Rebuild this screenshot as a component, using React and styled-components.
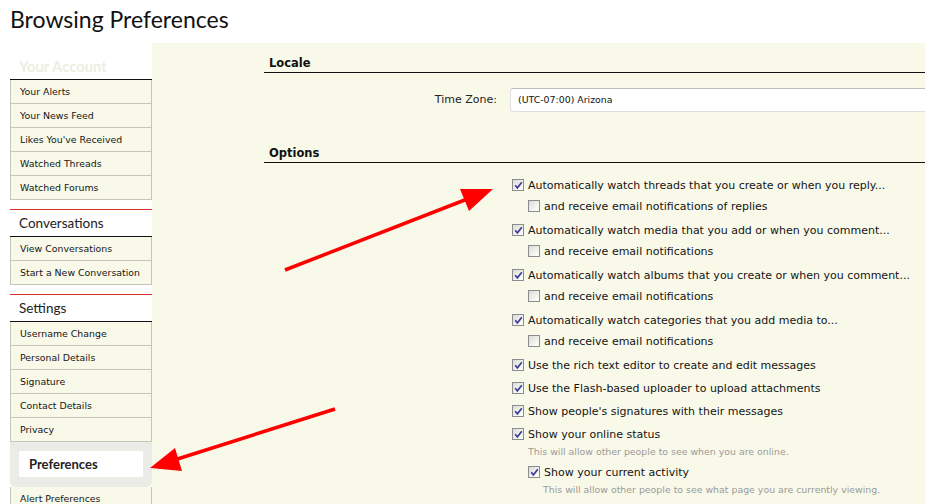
import React from "react";
import styled, { createGlobalStyle } from "styled-components";

const Global = createGlobalStyle`
  html, body { margin: 0; padding: 0; background: #fff; overflow: hidden; }
  body { font-family: "DejaVu Sans", Verdana, sans-serif; color: #141414; }
  * { box-sizing: border-box; }
`;

const Page = styled.div`
  position: relative;
  width: 925px;
  height: 504px;
  overflow: hidden;
`;

const Title = styled.h1`
  margin: 0;
  height: 43px;
  padding: 4px 0 0 10px;
  font-family: Lato, "Open Sans", sans-serif;
  font-weight: 400;
  font-size: 23px;
  line-height: 30px;
  color: #111;
`;

const Columns = styled.div`
  display: flex;
  align-items: stretch;
  height: 461px;
`;

const Sidebar = styled.nav`
  width: 152px;
  padding: 9px 0 0 10px;
  flex-shrink: 0;
`;

const Section = styled.div`
  margin-bottom: 9px;
`;

const SectionHead = styled.div`
  height: 28px;
  border-top: 1px solid ${(p) => (p.$first ? "transparent" : "#d0302a")};
  border-bottom: 1px solid #111;
  padding-left: 9px;
  font-family: Lato, "Open Sans", sans-serif;
  font-size: ${(p) => (p.$first ? "14.8px" : "13.5px")};
  font-weight: ${(p) => (p.$first ? 700 : 400)};
  line-height: 26px;
  color: ${(p) => (p.$faint ? "#eeeedf" : "#222")};
`;

const NavItem = styled.div`
  height: 24px;
  background: #f9f9e9;
  border-left: 1px solid #c6c6b6;
  border-right: 1px solid #c6c6b6;
  border-bottom: 1px solid #c6c6b6;
  padding-left: 9px;
  font-size: 9.4px;
  line-height: 23px;
  color: #151515;
  white-space: nowrap;
`;

const SelectedWrap = styled.div`
  background: #ebebe8;
  padding: 9px;
  border-radius: 0 0 5px 5px;
  height: 45px;
`;

const SelectedItem = styled.div`
  background: #fff;
  height: 26px;
  padding-left: 10px;
  font-family: Lato, "Open Sans", sans-serif;
  font-weight: 700;
  font-size: 13px;
  line-height: 26px;
  color: #222;
`;

const Main = styled.main`
  flex: 1;
  background: #f9f9e9;
  padding: 7px 0 0 112px;
  overflow: hidden;
`;

const Heading = styled.h2`
  margin: ${(p) => p.$mt || "0"} 0 0 0;
  height: 23px;
  border-bottom: 1px solid #111;
  padding: 3px 0 0 5px;
  font-size: 11.5px;
  font-weight: 700;
  line-height: 20px;
  color: #111;
`;

const FormRow = styled.div`
  display: grid;
  grid-template-columns: 233px 1fr;
  column-gap: 13px;
  align-items: start;
  margin-top: ${(p) => p.$mt || "0"};
`;

const Label = styled.div`
  text-align: right;
  font-size: 11px;
  line-height: 24px;
  color: #222;
`;

const Input = styled.div`
  width: 440px;
  height: 24px;
  background: #fff;
  border: 1px solid #dedede;
  border-top-color: #bdbdbd;
  border-radius: 3px 0 0 3px;
  padding-left: 7px;
  font-size: 9.4px;
  line-height: 22px;
  color: #111;
`;

const OptionList = styled.div`
  padding-left: 2px;
  display: flex;
  flex-direction: column;
  gap: 3px;
`;

const Option = styled.div``;

const Row = styled.div`
  display: flex;
  align-items: center;
  height: 20px;
  margin: ${(p) => (p.$sub ? (p.$afterDesc ? "3px 0 1px 16px" : "1px 0 1px 16px") : "0")};
  font-size: 11px;
  color: #141414;
  white-space: nowrap;
`;

const Box = styled.span`
  width: 12px;
  height: 12px;
  margin-right: 4px;
  flex-shrink: 0;
  border: 1px solid #8a8c90;
  background: linear-gradient(135deg, #dcdcd6 0%, #f6f6f2 70%, #ffffff 100%);
  display: flex;
  align-items: center;
  justify-content: center;
`;

const Desc = styled.div`
  margin: 1px 0 0 ${(p) => (p.$sub ? "31px" : "16px")};
  height: 14px;
  font-size: 9.4px;
  line-height: 14px;
  color: #9a9a9a;
  white-space: nowrap;
`;

const Overlay = styled.svg`
  position: absolute;
  left: 0;
  top: 0;
  pointer-events: none;
`;

const Check = ({ on }) => (
  <Box>
    {on && (
      <svg width="9" height="9" viewBox="0 0 9 9">
        <path d="M1.2 4.2 L3.4 6.8 L7.8 1.2" fill="none" stroke="#3d3d9e" strokeWidth="1.7" />
      </svg>
    )}
  </Box>
);

const account = ["Your Alerts", "Your News Feed", "Likes You've Received", "Watched Threads", "Watched Forums"];
const convs = ["View Conversations", "Start a New Conversation"];
const settings = ["Username Change", "Personal Details", "Signature", "Contact Details", "Privacy"];

const options = [
  { t: "Automatically watch threads that you create or when you reply...", sub: "and receive email notifications of replies" },
  { t: "Automatically watch media that you add or when you comment...", sub: "and receive email notifications" },
  { t: "Automatically watch albums that you create or when you comment...", sub: "and receive email notifications" },
  { t: "Automatically watch categories that you add media to...", sub: "and receive email notifications" },
  { t: "Use the rich text editor to create and edit messages" },
  { t: "Use the Flash-based uploader to upload attachments" },
  { t: "Show people's signatures with their messages" },
  {
    t: "Show your online status",
    desc: "This will allow other people to see when you are online.",
    sub: "Show your current activity",
    subOn: true,
    subDesc: "This will allow other people to see what page you are currently viewing.",
  },
];

export default function App() {
  return (
    <Page>
      <Global />
      <Title>Browsing Preferences</Title>
      <Columns>
        <Sidebar>
          <Section>
            <SectionHead $first $faint>Your Account</SectionHead>
            {account.map((a) => (
              <NavItem key={a}>{a}</NavItem>
            ))}
          </Section>
          <Section>
            <SectionHead>Conversations</SectionHead>
            {convs.map((a) => (
              <NavItem key={a}>{a}</NavItem>
            ))}
          </Section>
          <div>
            <SectionHead>Settings</SectionHead>
            {settings.map((a) => (
              <NavItem key={a}>{a}</NavItem>
            ))}
            <SelectedWrap>
              <SelectedItem>Preferences</SelectedItem>
            </SelectedWrap>
            <NavItem>Alert Preferences</NavItem>
          </div>
        </Sidebar>
        <Main>
          <Heading>Locale</Heading>
          <FormRow $mt="15px">
            <Label>Time Zone:</Label>
            <Input>(UTC-07:00) Arizona</Input>
          </FormRow>
          <Heading $mt="28px">Options</Heading>
          <FormRow $mt="12px">
            <div />
            <OptionList>
              {options.map((o) => (
                <Option key={o.t}>
                  <Row>
                    <Check on />
                    {o.t}
                  </Row>
                  {o.desc && <Desc>{o.desc}</Desc>}
                  {o.sub && (
                    <Row $sub $afterDesc={!!o.desc}>
                      <Check on={!!o.subOn} />
                      {o.sub}
                    </Row>
                  )}
                  {o.subDesc && <Desc $sub>{o.subDesc}</Desc>}
                </Option>
              ))}
            </OptionList>
          </FormRow>
        </Main>
      </Columns>
      <Overlay width="925" height="504" viewBox="0 0 925 504">
        <line x1="285" y1="270" x2="475" y2="196" stroke="#f00" strokeWidth="3.5" />
        <polygon points="460,189 493,189 469,211" fill="#f00" />
        <line x1="335" y1="409" x2="168" y2="462" stroke="#f00" strokeWidth="3.5" />
        <polygon points="175,448 150,468 182,471" fill="#f00" />
      </Overlay>
    </Page>
  );
}
